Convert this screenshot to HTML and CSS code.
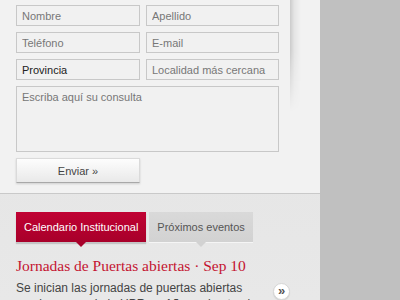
FILE: index.html
```html
<!DOCTYPE html>
<html lang="es">
<head>
    <meta charset="UTF-8">
    <title>Contacto</title>
    <link rel="stylesheet" href="styles.css">
</head>
<body>
    <div class="page">
        <div class="main">
            <form class="contact">
                <div class="fields">
                    <input type="text" placeholder="Nombre">
                    <input type="text" placeholder="Apellido">
                    <input type="text" placeholder="Teléfono">
                    <input type="text" placeholder="E-mail">
                    <select name="provincia">
                        <option>Provincia</option>
                    </select>
                    <input type="text" placeholder="Localidad más cercana">
                    <textarea placeholder="Escriba aquí su consulta"></textarea>
                </div>
                <button type="button" class="send">Enviar &raquo;</button>
            </form>
            <div class="events">
                <div class="tabs">
                    <span class="tab active">Calendario Institucional</span>
                    <span class="tab">Próximos eventos</span>
                </div>
                <h3 class="event-title">Jornadas de Puertas abiertas &middot; Sep 10</h3>
                <div class="event-body">
                    <p>Se inician las jornadas de puertas abiertas en el campus de la UPR en Añasco hasta el viernes.</p>
                    <a class="more" href="#">&raquo;</a>
                </div>
            </div>
        </div>
        <div class="side"></div>
    </div>
</body>
</html>
```

FILE: styles.css
```css
body {
    margin: 0;
    font-family: "Liberation Sans", Arial, sans-serif;
    background-color: #c0c0c0;
}
.page {
    display: flex;
    height: 300px;
    overflow: hidden;
}
.main {
    width: 320px;
    background: linear-gradient(#e3e3e3, #e8e8e8);
}
.side {
    flex: 1;
    background-color: #c0c0c0;
}

/* formulario */
.contact {
    position: relative;
    height: 194px;
    margin: 0;
    padding: 5px 16px 0;
    box-sizing: border-box;
    background-color: #f2f2f2;
    border-bottom: 1px solid #c9c9c9;
}
.contact::after {
    content: "";
    position: absolute;
    left: 290px;
    top: 0;
    width: 11px;
    height: 112px;
    background: linear-gradient(to right, rgba(0, 0, 0, 0.16), rgba(0, 0, 0, 0.05) 40%, rgba(0, 0, 0, 0));
    -webkit-mask-image: linear-gradient(to bottom, #000 45%, transparent);
    mask-image: linear-gradient(to bottom, #000 45%, transparent);
}
.fields {
    display: grid;
    grid-template-columns: 124px 133px;
    gap: 6px;
    width: 263px;
}
.fields input,
.fields select,
.fields textarea {
    box-sizing: border-box;
    height: 21px;
    margin: 0;
    padding: 0 5px;
    font-family: inherit;
    font-size: 11px;
    color: #222;
    background-color: #f1f1f1;
    border: 1px solid #c8c8c8;
    border-radius: 0;
    outline: none;
}
.fields select {
    -webkit-appearance: none;
    appearance: none;
}
.fields textarea {
    grid-column: 1 / -1;
    height: 66px;
    padding: 4px 5px;
    resize: none;
}
.fields ::placeholder {
    color: #777;
    opacity: 1;
}
.send {
    display: block;
    width: 124px;
    height: 25px;
    margin-top: 6px;
    padding: 0;
    font-family: inherit;
    font-size: 11px;
    color: #444;
    background: linear-gradient(#fdfdfd, #e9e9e9);
    border: 1px solid #dadada;
    border-bottom-color: #a8a8a8;
    box-shadow: 0 1px 2px rgba(0, 0, 0, 0.15);
    cursor: pointer;
}

/* eventos */
.events {
    padding: 18px 16px 0;
}
.tabs {
    display: flex;
    gap: 3px;
}
.tab {
    position: relative;
    height: 30px;
    line-height: 30px;
    padding: 0 8px;
    font-size: 11px;
    color: #555;
    background: linear-gradient(#d9d9d9, #d2d2d2);
    box-shadow: 0 1px 0 #f5f5f5;
}
.tab::after {
    content: "";
    position: absolute;
    left: 50%;
    bottom: -5px;
    margin-left: -5px;
    border-left: 5px solid transparent;
    border-right: 5px solid transparent;
    border-top: 5px solid #d2d2d2;
}
.tab.active {
    color: #fff;
    background: linear-gradient(#c00233, #a8002a);
    box-shadow: 0 2px 1px rgba(0, 0, 0, 0.15);
}
.tab.active::after {
    border-top-color: #a8002a;
}
.event-title {
    margin: 15px 0 0;
    font-family: "Liberation Serif", "Times New Roman", serif;
    font-size: 15.5px;
    line-height: 18px;
    font-weight: normal;
    color: #c41431;
}
.event-body {
    display: flex;
    align-items: flex-start;
    margin-top: 5px;
}
.event-body p {
    width: 236px;
    margin: 0;
    font-size: 12px;
    line-height: 16px;
    color: #444;
}
.more {
    width: 15px;
    height: 15px;
    margin: 3px 0 0 21px;
    border: 1px solid #d6d6d6;
    border-radius: 50%;
    background-color: #fff;
    box-shadow: 0 1px 1px rgba(0, 0, 0, 0.1);
    text-align: center;
    line-height: 14px;
    font-size: 13px;
    font-weight: bold;
    color: #555;
    text-decoration: none;
}
```
